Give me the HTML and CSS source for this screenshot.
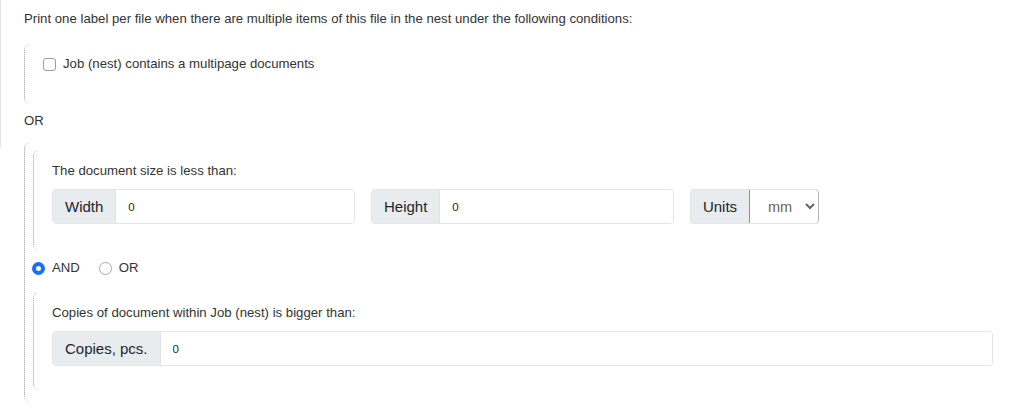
FILE: index.html
```html
<!doctype html>
<html>
    <head>
        <meta name="viewport" content="width=device-width, initial-scale=1.0">
        <title>Label conditions</title>
        <link rel="stylesheet" href="styles.css">
    </head>
    <body>
        <div class="page">
            <div class="intro">
                Print one label per file when there are multiple items of this file in the nest under the following conditions:
            </div>

            <div class="group group-first">
                <label class="check-row">
                    <input type="checkbox">
                    <span>Job (nest) contains a multipage documents</span>
                </label>
            </div>

            <div class="or-label">OR</div>

            <div class="group group-second">
                <div class="group inner inner-size">
                    <div class="caption">The document size is less than:</div>
                    <div class="size-row">
                        <div class="input-group">
                            <span class="addon">Width</span>
                            <input class="field" type="text" value="0">
                        </div>
                        <div class="input-group">
                            <span class="addon">Height</span>
                            <input class="field" type="text" value="0">
                        </div>
                        <div class="input-group units">
                            <span class="addon">Units</span>
                            <select class="unit-select">
                                <option>mm</option>
                                <option>in</option>
                            </select>
                        </div>
                    </div>
                </div>

                <div class="radio-row">
                    <label><input type="radio" name="op" checked> AND</label>
                    <label><input type="radio" name="op"> OR</label>
                </div>

                <div class="group inner inner-copies">
                    <div class="caption">Copies of document within Job (nest) is bigger than:</div>
                    <div class="input-group copies">
                        <span class="addon">Copies, pcs.</span>
                        <input class="field" type="text" value="0">
                    </div>
                </div>
            </div>
        </div>
    </body>
</html>
```

FILE: styles.css
```css
body {
    font-family: "Liberation Sans", Arial, sans-serif;
    font-size: 13.2px;
    color: #333;
    background-color: #fff;
    margin: 0;
    padding: 0;
}

.page {
    padding: 12px 24px 0 24px;
    background: linear-gradient(#e4e4e4, #e4e4e4) no-repeat 0 0 / 1px 148px;
}

.intro {
    line-height: 14px;
    margin-bottom: 18px;
}

.group {
    border-left: 1px dotted #9a9a9a;
    border-radius: 6px 0 0 6px;
}

.group-first {
    height: 60px;
    padding-left: 18px;
    box-sizing: border-box;
    padding-top: 13px;
}

.check-row {
    display: flex;
    align-items: center;
    gap: 7px;
    line-height: 14px;
}

.check-row input {
    appearance: none;
    margin: 0;
    width: 13px;
    height: 13px;
    border: 1px solid #9c9c9c;
    border-radius: 3px;
    background-color: #fff;
}

.or-label {
    line-height: 14px;
    margin: 10px 0 14px 0;
}

.group-second {
    padding: 8px 0 12px 8px;
}

.inner {
    padding-left: 18px;
    padding-top: 14px;
}

.inner-size {
    padding-bottom: 26px;
}

.inner-copies {
    padding-bottom: 24px;
}

.caption {
    line-height: 14px;
    margin-bottom: 11px;
}

.size-row {
    display: grid;
    grid-template-columns: 303px 303px auto;
    gap: 16px;
    justify-content: start;
}

.input-group {
    display: flex;
    height: 35px;
    border: 1px solid #e2e5e9;
    border-radius: 4px;
    box-sizing: border-box;
    overflow: hidden;
}

.copies {
    margin-right: 7px;
}

.addon {
    display: flex;
    align-items: center;
    padding: 0 12px;
    background-color: #e9ecef;
    border-right: 1px solid #dfe3e7;
    font-size: 15px;
    color: #212529;
}

.field {
    flex: 1;
    min-width: 0;
    border: none;
    outline: none;
    padding: 0 12px;
    font-family: inherit;
    font-size: 11.5px;
    color: #212529;
}

.units {
    border-right: none;
}

.units .addon {
    width: 58px;
    padding: 0;
    justify-content: center;
    box-sizing: border-box;
    border-right: none;
}

.unit-select {
    width: 70px;
    margin: -1px 0;
    height: 35px;
    border: 1px solid #8f8f8f;
    border-right-color: #b5b5b5;
    border-bottom-color: #b5b5b5;
    border-radius: 0 4px 4px 0;
    background-color: #fff;
    font-family: inherit;
    font-size: 14.5px;
    color: #666;
    padding: 0 0 0 14px;
}

.radio-row {
    display: flex;
    align-items: center;
    gap: 19px;
    height: 14px;
    margin: 11px 0 17px -1px;
}

.radio-row label {
    display: flex;
    align-items: center;
    gap: 7px;
    line-height: 14px;
}

.radio-row input {
    appearance: none;
    margin: 0;
    width: 13px;
    height: 13px;
    box-sizing: border-box;
    border: 1px solid #a8a8a8;
    border-radius: 50%;
    background-color: #fff;
}

.radio-row input:checked {
    border: 4px solid #1a6ef5;
}
```
